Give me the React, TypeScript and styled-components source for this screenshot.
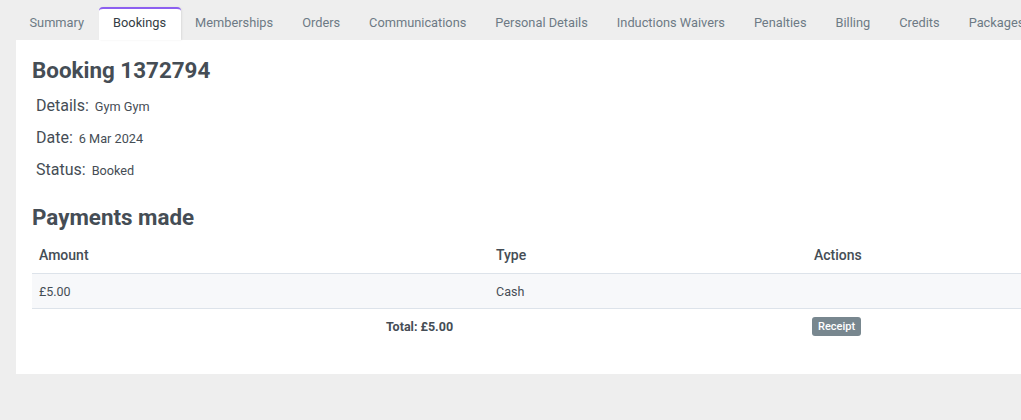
import React from 'react';
import styled, { createGlobalStyle } from 'styled-components';

const GlobalStyle = createGlobalStyle`
  html, body {
    margin: 0;
    padding: 0;
    background: #eeeeee;
    overflow: hidden;
  }
  body {
    font-family: Roboto, "Liberation Sans", Arial, sans-serif;
    color: #454d55;
  }
`;

const tabs = [
  'Summary',
  'Bookings',
  'Memberships',
  'Orders',
  'Communications',
  'Personal Details',
  'Inductions Waivers',
  'Penalties',
  'Billing',
  'Credits',
  'Packages',
];

const details = [
  { label: 'Details:', value: 'Gym Gym' },
  { label: 'Date:', value: '6 Mar 2024' },
  { label: 'Status:', value: 'Booked' },
];

const Page = styled.div`
  width: 1200px;
  padding-top: 7px;
`;

const TabBar = styled.ul`
  display: flex;
  list-style: none;
  margin: 0 0 0 15px;
  padding: 0;
  white-space: nowrap;
`;

const Tab = styled.li<{ $active?: boolean }>`
  padding: 0 14.5px 5px;
  height: 33px;
  box-sizing: border-box;
  display: flex;
  align-items: center;
  font-size: 12.8px;
  color: ${(p) => (p.$active ? '#343c44' : '#6d7a85')};
  background: ${(p) => (p.$active ? '#ffffff' : 'transparent')};
  border-top: 2px solid ${(p) => (p.$active ? '#8c5ff0' : 'transparent')};
  border-radius: 4px 4px 0 0;
  box-shadow: ${(p) => (p.$active ? '1px 0 2px rgba(0, 0, 0, 0.08)' : 'none')};
`;

const Card = styled.div`
  margin-left: 16px;
  width: 1100px;
  background: #ffffff;
  padding: 16px 16px 31px;
  box-sizing: border-box;
`;

const Heading = styled.h2`
  margin: 0;
  font-size: 22.4px;
  line-height: 28px;
  font-weight: 700;
  color: #454d55;
`;

const DetailList = styled.div`
  display: flex;
  flex-direction: column;
  padding: 6px 0 0 4px;
  margin-bottom: 17px;
`;

const DetailRow = styled.div`
  display: flex;
  align-items: baseline;
  gap: 6px;
  height: 32px;
  line-height: 32px;
`;

const Label = styled.span`
  font-size: 16px;
  color: #454d55;
`;

const Value = styled.span`
  font-size: 12.7px;
  color: #454d55;
`;

const Table = styled.table`
  width: 100%;
  table-layout: fixed;
  border-collapse: collapse;
  margin-top: 6px;
  font-size: 12.5px;
`;

const Th = styled.th<{ $width?: number }>`
  text-align: left;
  font-weight: 500;
  font-size: 14px;
  padding: 0 7px;
  height: 36px;
  color: #454d55;
  width: ${(p) => (p.$width ? `${p.$width}px` : 'auto')};
  border-bottom: 1px solid #dde3ea;
`;

const BodyRow = styled.tr<{ $striped?: boolean }>`
  background: ${(p) => (p.$striped ? '#f7f8fa' : 'transparent')};
`;

const Td = styled.td<{ $center?: boolean; $bold?: boolean }>`
  padding: 0 7px;
  height: 34px;
  text-align: ${(p) => (p.$center ? 'center' : 'left')};
  font-weight: ${(p) => (p.$bold ? 700 : 400)};
  color: #454d55;
`;

const DataTd = styled(Td)`
  border-bottom: 1px solid #dde3ea;
`;

const Badge = styled.span`
  display: inline-block;
  margin-left: -2px;
  padding: 0 6px;
  height: 19px;
  line-height: 19px;
  font-size: 11px;
  font-weight: 500;
  color: #ffffff;
  background: #78878f;
  border-radius: 3px;
`;

export default function App() {
  return (
    <>
      <GlobalStyle />
      <Page>
        <TabBar>
          {tabs.map((t) => (
            <Tab key={t} $active={t === 'Bookings'}>
              {t}
            </Tab>
          ))}
        </TabBar>
        <Card>
          <Heading>Booking 1372794</Heading>
          <DetailList>
            {details.map((d) => (
              <DetailRow key={d.label}>
                <Label>{d.label}</Label>
                <Value>{d.value}</Value>
              </DetailRow>
            ))}
          </DetailList>
          <Heading>Payments made</Heading>
          <Table>
            <thead>
              <tr>
                <Th $width={443}>Amount</Th>
                <Th $width={304}>Type</Th>
                <Th>Actions</Th>
              </tr>
            </thead>
            <tbody>
              <BodyRow $striped>
                <DataTd>£5.00</DataTd>
                <DataTd>Cash</DataTd>
                <DataTd />
              </BodyRow>
              <BodyRow>
                <Td colSpan={2} $center $bold>
                  Total: £5.00
                </Td>
                <Td>
                  <Badge>Receipt</Badge>
                </Td>
              </BodyRow>
            </tbody>
          </Table>
        </Card>
      </Page>
    </>
  );
}
